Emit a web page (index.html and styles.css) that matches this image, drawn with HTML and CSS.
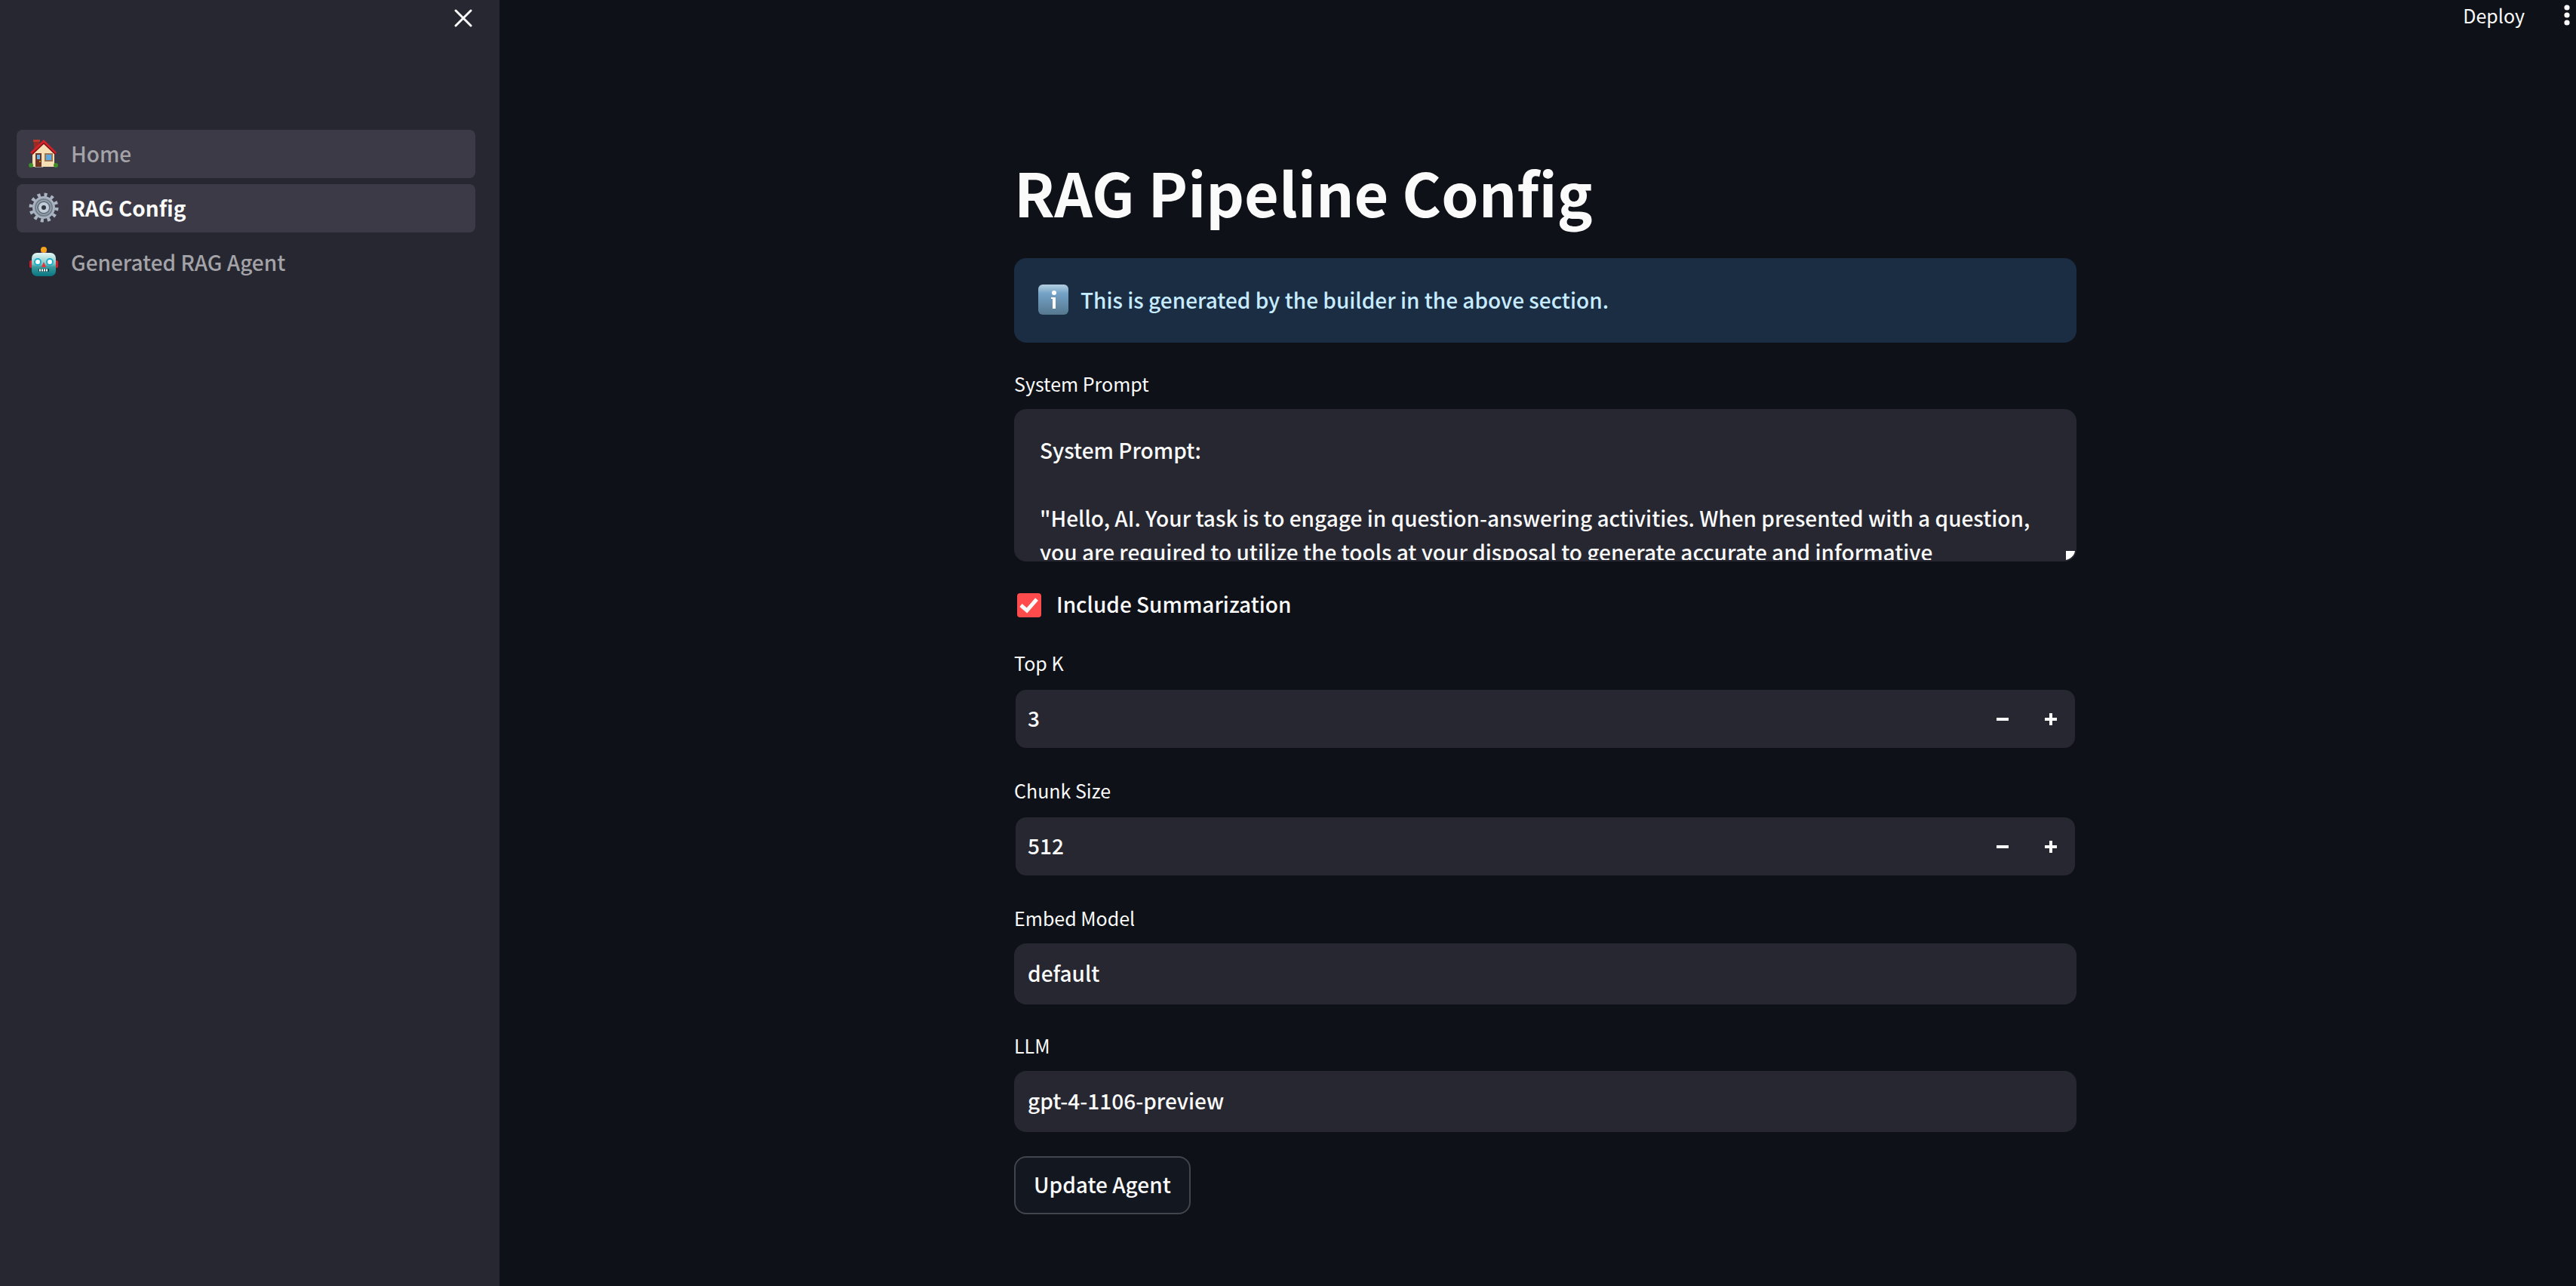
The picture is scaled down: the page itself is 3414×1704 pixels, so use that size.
FILE: index.html
```html
<!DOCTYPE html>
<html lang="en">
<head>
<meta charset="utf-8">
<title>RAG Pipeline Config</title>
<link rel="stylesheet" href="styles.css">
</head>
<body>
<div class="app">
  <aside class="sidebar">
    <div class="sidebar-head">
      <button class="icon-button" type="button" aria-label="Close sidebar">
        <svg width="24" height="24" viewBox="0 0 24 24" fill="none" stroke="currentColor" stroke-width="3" stroke-linecap="round"><path d="M2 2L22 22M22 2L2 22"/></svg>
      </button>
    </div>
    <nav class="nav">
      <a class="nav-link hovered" href="#home">
        <svg class="nav-icon" viewBox="0 0 40 40">
          <path d="M7 3h7v9l-7 6z" fill="#9a2a22"/><path d="M6 2h9v3H6z" fill="#b93a2d"/>
          <path d="M5 19L20 5l14 14v19H5z" fill="#f6dfb4"/>
          <path d="M20 2L37 19l-2 3L20 7 5 22l-3-3z" fill="#d3222a"/>
          <path d="M20 6L36 21l-1 1L20 8 5 22l-1-1z" fill="#7d1216"/>
          <path d="M9 20h8v18H9z" fill="#6e3423"/><path d="M11 22h4v6h-4z" fill="#5db4ee"/><circle cx="15" cy="31" r="1" fill="#e5a83a"/>
          <path d="M21 20h11v11H21z" fill="#9b7558"/><path d="M23 22h7v7h-7z" fill="#5aa9e2"/>
          <path d="M8 38h11v1H8z" fill="#8f8b89"/>
          <circle cx="3" cy="36" r="3" fill="#3f8d28"/><circle cx="36" cy="36" r="3" fill="#3f8d28"/>
        </svg>
        <span>Home</span>
      </a>
      <a class="nav-link active" href="#config" aria-current="page">
        <svg class="nav-icon" viewBox="0 0 40 40">
          <circle cx="20" cy="20" r="17" fill="none" stroke="#a9b5c3" stroke-width="5" stroke-dasharray="4 4.9" />
          <circle cx="20" cy="20" r="12" fill="#66727e" stroke="#a8b2c0" stroke-width="6"/>
          <circle cx="20" cy="20" r="11" fill="none" stroke="#737f8b" stroke-width="2"/>
          <circle cx="20" cy="20" r="5" fill="#303740" stroke="#c3cedb" stroke-width="4"/>
        </svg>
        <span>RAG Config</span>
      </a>
      <a class="nav-link" href="#agent">
        <svg class="nav-icon" viewBox="0 0 40 40">
          <defs><linearGradient id="face" x1="0" y1="0" x2="0" y2="1"><stop offset="0" stop-color="#e4f8f5"/><stop offset=".45" stop-color="#8bc9c6"/><stop offset=".6" stop-color="#3a9b9d"/><stop offset="1" stop-color="#087581"/></linearGradient></defs>
          <rect x="1" y="18" width="5" height="10" rx="2" fill="#c8202f"/><rect x="34" y="18" width="5" height="10" rx="2" fill="#c8202f"/>
          <rect x="16" y="5" width="8" height="5" rx="2" fill="#6a4692"/><circle cx="20" cy="4" r="4" fill="#f5a51c"/>
          <rect x="4" y="8" width="32" height="31" rx="7" fill="url(#face)"/>
          <circle cx="12" cy="20" r="4" fill="#fff" stroke="#19aecb" stroke-width="2"/><circle cx="28" cy="20" r="4" fill="#fff" stroke="#19aecb" stroke-width="2"/>
          <path d="M20 20l3 7h-6z" fill="#e5333d"/>
          <path d="M13 29h14v4H13z" fill="#134b55"/><path d="M14 31h12" stroke="#fff" stroke-width="3" stroke-dasharray="2 1"/>
        </svg>
        <span>Generated RAG Agent</span>
      </a>
    </nav>
  </aside>

  <div class="page">
    <header class="toolbar">
      <button class="deploy" type="button">Deploy</button>
      <button class="icon-button" type="button" aria-label="Main menu">
        <svg width="8" height="28" viewBox="0 0 8 28" fill="currentColor"><circle cx="4" cy="4" r="3.6"/><circle cx="4" cy="14" r="3.6"/><circle cx="4" cy="24" r="3.6"/></svg>
      </button>
    </header>

    <main class="content">
      <h1 class="title">RAG Pipeline Config</h1>
      <form class="form">
        <div class="alert" role="note">
          <svg class="alert-icon" viewBox="0 0 40 40">
            <defs><linearGradient id="tile" x1="0" y1="0" x2="0" y2="1"><stop offset="0" stop-color="#b4cfe0"/><stop offset=".3" stop-color="#74a2c6"/><stop offset="1" stop-color="#56788f"/></linearGradient></defs>
            <rect width="40" height="40" rx="6" fill="url(#tile)"/>
            <circle cx="21" cy="11" r="3" fill="#fff"/><path d="M17 17h6v15h-4V19h-2z" fill="#fff"/>
          </svg>
          <span>This is generated by the builder in the above section.</span>
        </div>

        <div class="field">
          <label class="label" for="prompt">System Prompt</label>
          <div class="textarea-wrap">
            <textarea class="textarea" id="prompt" spellcheck="false">System Prompt:

"Hello, AI. Your task is to engage in question-answering activities. When presented with a question, you are required to utilize the tools at your disposal to generate accurate and informative</textarea>
            <svg class="grip" width="12" height="12" viewBox="0 0 12 12" fill="#fff"><path d="M0 0H12C11 6 7 10 0 12Z"/></svg>
          </div>
        </div>

        <label class="check">
          <input class="check-box" type="checkbox" checked>
          <span class="check-text">Include Summarization</span>
        </label>

        <div class="field">
          <label class="label" for="topk">Top K</label>
          <div class="number">
            <input class="number-input" id="topk" type="text" inputmode="numeric" value="3">
            <button class="step" type="button" aria-label="Decrease Top K"><svg width="16" height="16" fill="currentColor"><path d="M0 6h16v4H0z"/></svg></button>
            <button class="step" type="button" aria-label="Increase Top K"><svg width="16" height="16" fill="currentColor"><path d="M0 6h6V0h4v6h6v4h-6v6H6v-6H0z"/></svg></button>
          </div>
        </div>

        <div class="field">
          <label class="label" for="chunk">Chunk Size</label>
          <div class="number">
            <input class="number-input" id="chunk" type="text" inputmode="numeric" value="512">
            <button class="step" type="button" aria-label="Decrease Chunk Size"><svg width="16" height="16" fill="currentColor"><path d="M0 6h16v4H0z"/></svg></button>
            <button class="step" type="button" aria-label="Increase Chunk Size"><svg width="16" height="16" fill="currentColor"><path d="M0 6h6V0h4v6h6v4h-6v6H6v-6H0z"/></svg></button>
          </div>
        </div>

        <div class="field">
          <label class="label" for="embed">Embed Model</label>
          <input class="text-input" id="embed" type="text" value="default">
        </div>

        <div class="field">
          <label class="label" for="llm">LLM</label>
          <input class="text-input" id="llm" type="text" value="gpt-4-1106-preview">
        </div>

        <button class="submit" type="button">Update Agent</button>
      </form>
    </main>
  </div>
</div>
</body>
</html>
```
FILE: styles.css
```css
:root {
  --bg: #0e1117;
  --panel: #262730;
  --text: #fafafa;
  --size: 28px;
  --size-small: 25px;
}

* {
  box-sizing: border-box;
}

body {
  margin: 0;
  background: var(--bg);
  color: var(--text);
  font-family: "Noto Sans CJK SC", "Noto Sans", sans-serif;
  font-size: var(--size);
  font-weight: 500;
  line-height: 48px;
}

button,
input,
textarea {
  margin: 0;
  border: 0;
  background: none;
  color: inherit;
  font: inherit;
}

svg {
  display: block;
  flex: none;
}

.app {
  display: flex;
  min-height: 100vh;
}

.sidebar {
  flex: none;
  width: 662px;
  padding: 0 32px 0 22px;
  background: var(--panel);
}

.sidebar-head {
  display: flex;
  justify-content: flex-end;
  height: 172px;
  padding: 12px 4px 0 0;
}

.icon-button {
  display: flex;
  align-items: flex-start;
  padding: 0;
}

.nav {
  display: flex;
  flex-direction: column;
  gap: 8px;
}

.nav-link {
  display: flex;
  align-items: center;
  gap: 16px;
  height: 64px;
  padding: 0 16px 2px;
  border-radius: 8px;
  color: #a3a3a8;
  text-decoration: none;
}

.nav-link.hovered,
.nav-link.active {
  background: #3c3a47;
}

.nav-link.active {
  color: var(--text);
  font-weight: 700;
}

.nav-icon {
  width: 40px;
  height: 40px;
}

.page {
  flex: 1;
  min-width: 0;
  padding-left: 20px;
}

.toolbar {
  display: flex;
  justify-content: flex-end;
  gap: 52px;
  height: 190px;
  padding: 6px 8px 0 0;
}

.deploy {
  align-self: flex-start;
  padding: 0;
  font-size: var(--size-small);
  font-weight: 400;
  line-height: 28px;
}

.content {
  max-width: 1408px;
  margin: 0 auto;
  padding-bottom: 80px;
}

.title {
  margin: 0;
  padding-bottom: 24px;
  font-size: 79px;
  font-weight: 700;
  line-height: 128px;
}

.form {
  display: flex;
  flex-direction: column;
  gap: 32px;
}

.alert {
  display: flex;
  align-items: center;
  gap: 16px;
  height: 112px;
  padding: 0 32px 2px;
  border-radius: 16px;
  background: #1a2d43;
  color: #c7ebff;
}

.alert-icon {
  width: 40px;
  height: 40px;
}

.field {
  display: flex;
  flex-direction: column;
  gap: 12px;
}

.label {
  font-size: var(--size-small);
  font-weight: 400;
  line-height: 44px;
}

.textarea-wrap {
  position: relative;
  display: flex;
}

.textarea {
  width: 100%;
  height: 202px;
  padding: 30px 32px;
  border: 2px solid var(--panel);
  border-radius: 16px;
  background: var(--panel);
  line-height: 45px;
  overflow: hidden;
  resize: none;
}

.grip {
  position: absolute;
  right: 2px;
  bottom: 2px;
}

.check {
  display: flex;
  align-items: center;
  gap: 20px;
  padding: 4px 0 0 4px;
}

.check-box {
  appearance: none;
  width: 32px;
  height: 32px;
  border-radius: 4px;
  background: #ff4b4b url("data:image/svg+xml,%3Csvg xmlns='http://www.w3.org/2000/svg' viewBox='0 0 32 32'%3E%3Cpath d='M5 16l8 7L26 8' fill='none' stroke='%23fafafa' stroke-width='5'/%3E%3C/svg%3E") center / contain;
}

.check-text {
  padding-bottom: 4px;
  line-height: 40px;
}

.number {
  display: flex;
  height: 81px;
  border: 2px solid var(--bg);
  border-radius: 16px;
  background: var(--panel);
}

.number-input {
  flex: 1;
  min-width: 0;
  padding: 0 16px 4px;
}

.step {
  display: grid;
  place-items: center;
  width: 64px;
  padding: 0;
}

.text-input {
  height: 81px;
  padding: 0 18px 4px;
  border-radius: 16px;
  background: var(--panel);
}

.submit {
  align-self: flex-start;
  height: 77px;
  padding: 0 24px 4px;
  border: 2px solid #42454d;
  border-radius: 16px;
  background: #131720;
}
```
